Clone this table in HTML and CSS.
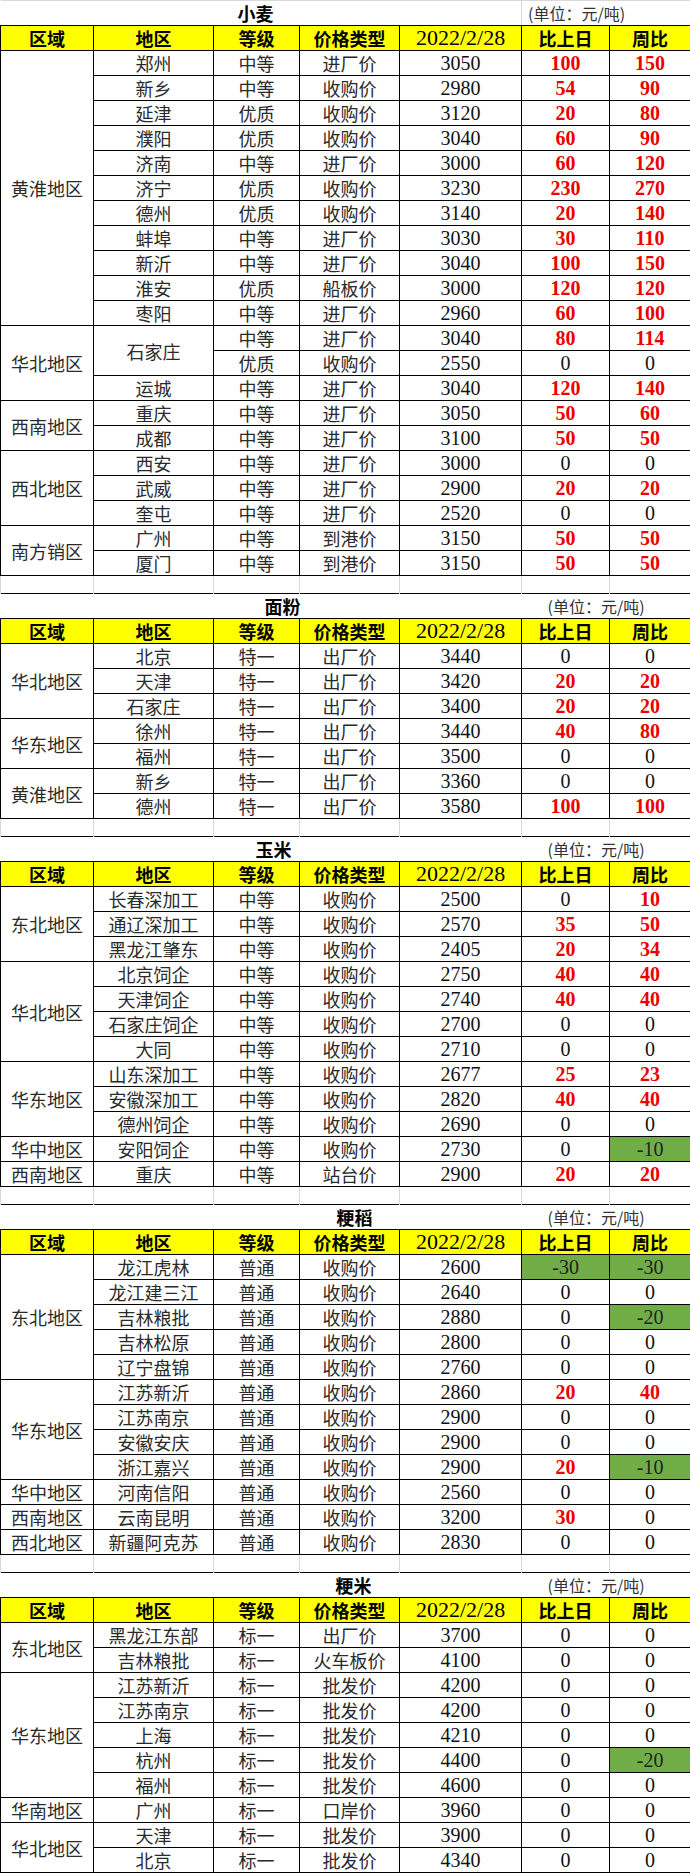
FILE: index.html
```html
<!DOCTYPE html>
<html lang="zh-CN">
<head>
<meta charset="utf-8">
<title>粮食价格</title>
<link rel="stylesheet" href="styles.css">
</head>
<body>
<table class="sheet">
<colgroup>
<col class="c1"><col class="c2"><col class="c3"><col class="c4"><col class="c5"><col class="c6"><col class="c7">
</colgroup>
<tbody>
<tr class="title first"><td colspan="5" class="ttl t-wheat">小麦</td><td colspan="2" class="unit u-first">(单位：元/吨)</td></tr>
<tr class="head"><td>区域</td><td>地区</td><td>等级</td><td>价格类型</td><td class="n">2022/2/28</td><td>比上日</td><td>周比</td></tr>
<tr><td rowspan="11">黄淮地区</td><td>郑州</td><td>中等</td><td>进厂价</td><td class="n">3050</td><td class="n r">100</td><td class="n r">150</td></tr>
<tr><td>新乡</td><td>中等</td><td>收购价</td><td class="n">2980</td><td class="n r">54</td><td class="n r">90</td></tr>
<tr><td>延津</td><td>优质</td><td>收购价</td><td class="n">3120</td><td class="n r">20</td><td class="n r">80</td></tr>
<tr><td>濮阳</td><td>优质</td><td>收购价</td><td class="n">3040</td><td class="n r">60</td><td class="n r">90</td></tr>
<tr><td>济南</td><td>中等</td><td>进厂价</td><td class="n">3000</td><td class="n r">60</td><td class="n r">120</td></tr>
<tr><td>济宁</td><td>优质</td><td>收购价</td><td class="n">3230</td><td class="n r">230</td><td class="n r">270</td></tr>
<tr><td>德州</td><td>优质</td><td>收购价</td><td class="n">3140</td><td class="n r">20</td><td class="n r">140</td></tr>
<tr><td>蚌埠</td><td>中等</td><td>进厂价</td><td class="n">3030</td><td class="n r">30</td><td class="n r">110</td></tr>
<tr><td>新沂</td><td>中等</td><td>进厂价</td><td class="n">3040</td><td class="n r">100</td><td class="n r">150</td></tr>
<tr><td>淮安</td><td>优质</td><td>船板价</td><td class="n">3000</td><td class="n r">120</td><td class="n r">120</td></tr>
<tr><td>枣阳</td><td>中等</td><td>进厂价</td><td class="n">2960</td><td class="n r">60</td><td class="n r">100</td></tr>
<tr><td rowspan="3">华北地区</td><td rowspan="2">石家庄</td><td>中等</td><td>进厂价</td><td class="n">3040</td><td class="n r">80</td><td class="n r">114</td></tr>
<tr><td>优质</td><td>收购价</td><td class="n">2550</td><td class="n">0</td><td class="n">0</td></tr>
<tr><td>运城</td><td>中等</td><td>进厂价</td><td class="n">3040</td><td class="n r">120</td><td class="n r">140</td></tr>
<tr><td rowspan="2">西南地区</td><td>重庆</td><td>中等</td><td>进厂价</td><td class="n">3050</td><td class="n r">50</td><td class="n r">60</td></tr>
<tr><td>成都</td><td>中等</td><td>进厂价</td><td class="n">3100</td><td class="n r">50</td><td class="n r">50</td></tr>
<tr><td rowspan="3">西北地区</td><td>西安</td><td>中等</td><td>进厂价</td><td class="n">3000</td><td class="n">0</td><td class="n">0</td></tr>
<tr><td>武威</td><td>中等</td><td>进厂价</td><td class="n">2900</td><td class="n r">20</td><td class="n r">20</td></tr>
<tr><td>奎屯</td><td>中等</td><td>进厂价</td><td class="n">2520</td><td class="n">0</td><td class="n">0</td></tr>
<tr><td rowspan="2">南方销区</td><td>广州</td><td>中等</td><td>到港价</td><td class="n">3150</td><td class="n r">50</td><td class="n r">50</td></tr>
<tr><td>厦门</td><td>中等</td><td>到港价</td><td class="n">3150</td><td class="n r">50</td><td class="n r">50</td></tr>
<tr class="gap"><td></td><td></td><td></td><td></td><td></td><td></td><td></td></tr>

<tr class="title"><td colspan="5" class="ttl t-flour">面粉</td><td colspan="2" class="unit">(单位：元/吨)</td></tr>
<tr class="head"><td>区域</td><td>地区</td><td>等级</td><td>价格类型</td><td class="n">2022/2/28</td><td>比上日</td><td>周比</td></tr>
<tr><td rowspan="3">华北地区</td><td>北京</td><td>特一</td><td>出厂价</td><td class="n">3440</td><td class="n">0</td><td class="n">0</td></tr>
<tr><td>天津</td><td>特一</td><td>出厂价</td><td class="n">3420</td><td class="n r">20</td><td class="n r">20</td></tr>
<tr><td>石家庄</td><td>特一</td><td>出厂价</td><td class="n">3400</td><td class="n r">20</td><td class="n r">20</td></tr>
<tr><td rowspan="2">华东地区</td><td>徐州</td><td>特一</td><td>出厂价</td><td class="n">3440</td><td class="n r">40</td><td class="n r">80</td></tr>
<tr><td>福州</td><td>特一</td><td>出厂价</td><td class="n">3500</td><td class="n">0</td><td class="n">0</td></tr>
<tr><td rowspan="2">黄淮地区</td><td>新乡</td><td>特一</td><td>出厂价</td><td class="n">3360</td><td class="n">0</td><td class="n">0</td></tr>
<tr><td>德州</td><td>特一</td><td>出厂价</td><td class="n">3580</td><td class="n r">100</td><td class="n r">100</td></tr>
<tr class="gap"><td></td><td></td><td></td><td></td><td></td><td></td><td></td></tr>

<tr class="title"><td colspan="5" class="ttl t-corn">玉米</td><td colspan="2" class="unit">(单位：元/吨)</td></tr>
<tr class="head"><td>区域</td><td>地区</td><td>等级</td><td>价格类型</td><td class="n">2022/2/28</td><td>比上日</td><td>周比</td></tr>
<tr><td rowspan="3">东北地区</td><td>长春深加工</td><td>中等</td><td>收购价</td><td class="n">2500</td><td class="n">0</td><td class="n r">10</td></tr>
<tr><td>通辽深加工</td><td>中等</td><td>收购价</td><td class="n">2570</td><td class="n r">35</td><td class="n r">50</td></tr>
<tr><td>黑龙江肇东</td><td>中等</td><td>收购价</td><td class="n">2405</td><td class="n r">20</td><td class="n r">34</td></tr>
<tr><td rowspan="4">华北地区</td><td>北京饲企</td><td>中等</td><td>收购价</td><td class="n">2750</td><td class="n r">40</td><td class="n r">40</td></tr>
<tr><td>天津饲企</td><td>中等</td><td>收购价</td><td class="n">2740</td><td class="n r">40</td><td class="n r">40</td></tr>
<tr><td>石家庄饲企</td><td>中等</td><td>收购价</td><td class="n">2700</td><td class="n">0</td><td class="n">0</td></tr>
<tr><td>大同</td><td>中等</td><td>收购价</td><td class="n">2710</td><td class="n">0</td><td class="n">0</td></tr>
<tr><td rowspan="3">华东地区</td><td>山东深加工</td><td>中等</td><td>收购价</td><td class="n">2677</td><td class="n r">25</td><td class="n r">23</td></tr>
<tr><td>安徽深加工</td><td>中等</td><td>收购价</td><td class="n">2820</td><td class="n r">40</td><td class="n r">40</td></tr>
<tr><td>德州饲企</td><td>中等</td><td>收购价</td><td class="n">2690</td><td class="n">0</td><td class="n">0</td></tr>
<tr><td>华中地区</td><td>安阳饲企</td><td>中等</td><td>收购价</td><td class="n">2730</td><td class="n">0</td><td class="n g">-10</td></tr>
<tr><td>西南地区</td><td>重庆</td><td>中等</td><td>站台价</td><td class="n">2900</td><td class="n r">20</td><td class="n r">20</td></tr>
<tr class="gap"><td></td><td></td><td></td><td></td><td></td><td></td><td></td></tr>

<tr class="title"><td colspan="5" class="ttl t-paddy">粳稻</td><td colspan="2" class="unit">(单位：元/吨)</td></tr>
<tr class="head"><td>区域</td><td>地区</td><td>等级</td><td>价格类型</td><td class="n">2022/2/28</td><td>比上日</td><td>周比</td></tr>
<tr><td rowspan="5">东北地区</td><td>龙江虎林</td><td>普通</td><td>收购价</td><td class="n">2600</td><td class="n g">-30</td><td class="n g">-30</td></tr>
<tr><td>龙江建三江</td><td>普通</td><td>收购价</td><td class="n">2640</td><td class="n">0</td><td class="n">0</td></tr>
<tr><td>吉林粮批</td><td>普通</td><td>收购价</td><td class="n">2880</td><td class="n">0</td><td class="n g">-20</td></tr>
<tr><td>吉林松原</td><td>普通</td><td>收购价</td><td class="n">2800</td><td class="n">0</td><td class="n">0</td></tr>
<tr><td>辽宁盘锦</td><td>普通</td><td>收购价</td><td class="n">2760</td><td class="n">0</td><td class="n">0</td></tr>
<tr><td rowspan="4">华东地区</td><td>江苏新沂</td><td>普通</td><td>收购价</td><td class="n">2860</td><td class="n r">20</td><td class="n r">40</td></tr>
<tr><td>江苏南京</td><td>普通</td><td>收购价</td><td class="n">2900</td><td class="n">0</td><td class="n">0</td></tr>
<tr><td>安徽安庆</td><td>普通</td><td>收购价</td><td class="n">2900</td><td class="n">0</td><td class="n">0</td></tr>
<tr><td>浙江嘉兴</td><td>普通</td><td>收购价</td><td class="n">2900</td><td class="n r">20</td><td class="n g">-10</td></tr>
<tr><td>华中地区</td><td>河南信阳</td><td>普通</td><td>收购价</td><td class="n">2560</td><td class="n">0</td><td class="n">0</td></tr>
<tr><td>西南地区</td><td>云南昆明</td><td>普通</td><td>收购价</td><td class="n">3200</td><td class="n r">30</td><td class="n">0</td></tr>
<tr><td>西北地区</td><td>新疆阿克苏</td><td>普通</td><td>收购价</td><td class="n">2830</td><td class="n">0</td><td class="n">0</td></tr>
<tr class="gap"><td></td><td></td><td></td><td></td><td></td><td></td><td></td></tr>

<tr class="title"><td colspan="5" class="ttl t-rice">粳米</td><td colspan="2" class="unit">(单位：元/吨)</td></tr>
<tr class="head"><td>区域</td><td>地区</td><td>等级</td><td>价格类型</td><td class="n">2022/2/28</td><td>比上日</td><td>周比</td></tr>
<tr><td rowspan="2">东北地区</td><td>黑龙江东部</td><td>标一</td><td>出厂价</td><td class="n">3700</td><td class="n">0</td><td class="n">0</td></tr>
<tr><td>吉林粮批</td><td>标一</td><td>火车板价</td><td class="n">4100</td><td class="n">0</td><td class="n">0</td></tr>
<tr><td rowspan="5">华东地区</td><td>江苏新沂</td><td>标一</td><td>批发价</td><td class="n">4200</td><td class="n">0</td><td class="n">0</td></tr>
<tr><td>江苏南京</td><td>标一</td><td>批发价</td><td class="n">4200</td><td class="n">0</td><td class="n">0</td></tr>
<tr><td>上海</td><td>标一</td><td>批发价</td><td class="n">4210</td><td class="n">0</td><td class="n">0</td></tr>
<tr><td>杭州</td><td>标一</td><td>批发价</td><td class="n">4400</td><td class="n">0</td><td class="n g">-20</td></tr>
<tr><td>福州</td><td>标一</td><td>批发价</td><td class="n">4600</td><td class="n">0</td><td class="n">0</td></tr>
<tr><td>华南地区</td><td>广州</td><td>标一</td><td>口岸价</td><td class="n">3960</td><td class="n">0</td><td class="n">0</td></tr>
<tr><td rowspan="2">华北地区</td><td>天津</td><td>标一</td><td>批发价</td><td class="n">3900</td><td class="n">0</td><td class="n">0</td></tr>
<tr><td>北京</td><td>标一</td><td>批发价</td><td class="n">4340</td><td class="n">0</td><td class="n">0</td></tr>
</tbody>
</table>
</body>
</html>
```

FILE: styles.css
```css
html, body {
  margin: 0;
  padding: 0;
  background: #ffffff;
}

.sheet {
  border-collapse: collapse;
  table-layout: fixed;
  width: 690px;
  font-family: "Noto Sans CJK SC", "Noto Sans CJK TC", sans-serif;
  color: #2a2a2a;
}

.c1 { width: 93px; }
.c2 { width: 120px; }
.c3 { width: 86px; }
.c4 { width: 100px; }
.c5 { width: 122px; }
.c6 { width: 88px; }
.c7 { width: 81px; }

.sheet tr {
  height: 25px;
}

.sheet td {
  border: 1px solid #000000;
  padding: 0;
  height: 24px;
  text-align: center;
  vertical-align: middle;
  font-size: 18px;
  line-height: 20px;
  white-space: nowrap;
  overflow: hidden;
}

.sheet td.n {
  font-family: "Liberation Serif", "Times New Roman", serif;
  font-size: 20px;
  color: #111111;
}

.sheet td.r {
  color: #ee0000;
  font-weight: bold;
}

.sheet td.g {
  background: #70ad47;
  color: #222222;
}

/* header row */
.head td {
  background: #ffff00;
  font-weight: bold;
  font-size: 18px;
  color: #000000;
}

.head td.n {
  font-weight: normal;
  font-size: 22px;
  color: #000000;
}

/* blank spacer rows */
.sheet tr.gap {
  height: 18px;
}

.gap td {
  height: 17px;
  border-top: none;
  border-bottom: none;
  border-left: 1px solid #d9d9d9;
  border-right: 1px solid #d9d9d9;
}

/* title rows */
.title td {
  border-left: none;
  border-right: none;
  text-align: left;
}

.title.first td {
  border-top: 1px solid #d9d9d9;
}

.title td.ttl {
  font-weight: bold;
  font-size: 18px;
  color: #000000;
}

.title td.unit {
  font-size: 16px;
  color: #333333;
  padding-left: 26px;
}

.title td.u-first {
  padding-left: 6px;
  border-left: 1px solid #d9d9d9;
}

.t-wheat { padding-left: 237px !important; }
.t-flour { padding-left: 264px !important; }
.t-corn { padding-left: 255px !important; }
.t-paddy { padding-left: 336px !important; }
.t-rice { padding-left: 335px !important; }
```
